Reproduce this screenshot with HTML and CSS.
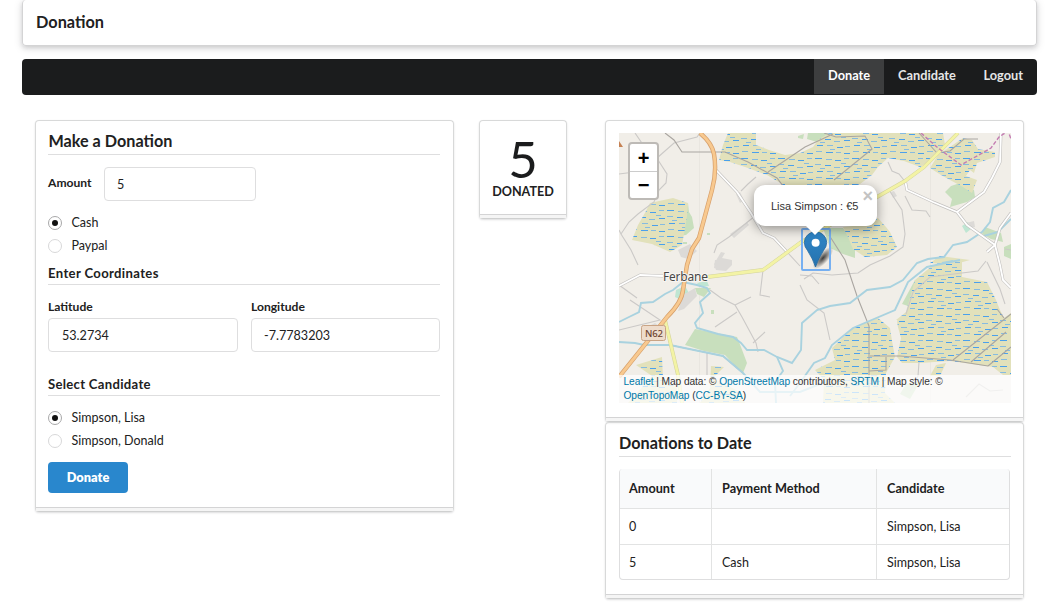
FILE: index.html
```html
<!DOCTYPE html>
<html lang="en">
<head>
<meta charset="utf-8">
<title>Donation</title>
<link rel="stylesheet" href="styles.css">
</head>
<body>
<header class="banner"><h1>Donation</h1></header>
<nav class="menu">
  <a class="item active">Donate</a><a class="item">Candidate</a><a class="item">Logout</a>
</nav>
<main class="grid">
  <section class="segment form">
    <h3>Make a Donation</h3>
    <div class="amount"><label>Amount</label><input type="text" value="5"></div>
    <div class="radios">
      <label class="radio"><i class="dot on"></i>Cash</label>
      <label class="radio"><i class="dot"></i>Paypal</label>
    </div>
    <h4>Enter Coordinates</h4>
    <div class="coords">
      <div class="field"><label>Latitude</label><input type="text" value="53.2734"></div>
      <div class="field"><label>Longitude</label><input type="text" value="-7.7783203"></div>
    </div>
    <h4 class="candidate-title">Select Candidate</h4>
    <div class="radios candidates">
      <label class="radio"><i class="dot on"></i>Simpson, Lisa</label>
      <label class="radio"><i class="dot"></i>Simpson, Donald</label>
    </div>
    <button class="button">Donate</button>
  </section>
  <section class="segment statistic">
    <div class="value">5</div>
    <div class="caption">Donated</div>
  </section>
  <div class="right">
    <section class="segment map-box">
      <div class="map">
        <svg class="tiles" viewBox="619 133 392 270" width="392" height="270">
          <defs>
            <pattern id="bog" width="37" height="26" patternUnits="userSpaceOnUse">
              <rect width="37" height="26" fill="#e2e1bb"/>
              <g stroke-width="1">
                <path stroke="#4aa0ec" d="M1 2.500h7M21 4.500h6M11 9.500h6M30 10.500h6M3 15.500h6M23 17.500h6M12 22.500h7M30 23.500h6"/>
                <path stroke="#86bbe0" d="M12 3.500h6M30 2.500h5M1 8.500h6M20 11.500h6M13 15.500h6M31 16.500h5M2 21.500h6M22 22.500h5M6 12.500h5M27 7.500h5M16 19.500h5"/>
              </g>
            </pattern>
            <radialGradient id="sh"><stop offset="0" stop-opacity=".75"/><stop offset="1" stop-opacity="0"/></radialGradient>
            <linearGradient id="pin" x2="0" y2="1"><stop stop-color="#2f86c7"/><stop offset="1" stop-color="#2572ae"/></linearGradient>
          </defs>
          <rect x="619" y="133" width="392" height="270" fill="#f1eee8"/>
          <path stroke="#e9e6e0" d="M699.500 133V403M930.500 133V403"/>
          <!-- woodland and meadow -->
          <g fill="#c8dfbd">
            <path d="M808 133H829L817 142L807 139ZM798 136L804 134L803 139L798 138Z"/>
            <path d="M688 203L689 212L692 217L694 228L686 235L679 236Z"/>
            <path d="M823 228H843L855 245V258L843 254L830 248Z"/>
            <path d="M945 192L951 186L960 183L974 190L975 197L967 202L950 207L952 199Z"/>
            <path d="M695 329L737 337L741 347L747 363L743 373L735 366L725 355L704 351L685 345Z"/>
            <path d="M915 280L902 304L908 306L919 285Z"/>
            <path d="M985 227L1001 233L1003 242L991 239L982 234ZM1004 247L1011 244V259L1004 256Z"/>
            <path d="M695 288L711 288L704 297L697 294ZM711 310h3v4h-3ZM906 384L920 382L910 399L900 394ZM707 233h3v2h-3ZM683 242h4v2h-4Z"/>
          </g>
          <path fill="#bfe6d3" d="M676 290l9-4 4 7-9 2-1 4-4-2ZM697 283l10-2 2 5-9 1ZM962 226l6-4 3 7-5 4Z"/>
          <!-- built-up areas -->
          <g fill="#dcdad7">
            <path d="M714 264l7-12 4 1-3 5 10 2v5l-6 6-10-1ZM678 250l12-6 7 7-9 8-7-2ZM643 329l12-6 8 6-11 6-10-1ZM966 223l8-2 1 6-6 1ZM730 234l17-12 2 3-15 13ZM736 194l4-2 4 8-4 3ZM891 192l3-1 3 5-4 2ZM683 295l12-7 2 8-13 13-6 2ZM715 260l7-1 4 7-5 4-7-2Z"/>
          </g>
          <!-- bogs -->
          <g fill="url(#bog)">
            <path d="M728 133H756V145L769 150L785 155L800 153L813 147L818 140L829 133H943L945 145L936 157L920 167L904 161L888 158L878 167L872 175L860 184L845 190H785L782 184L767 175L748 168L730 162L719 160L723 145Z"/>
            <path d="M963 138L972 140L978 149L995 152V157L977 163L974 173L970 170L966 176L977 180L972 193L963 187L950 180L941 175L930 168L938 155Z"/>
            <path d="M650 203L673 198L688 203L687 216L685 228L682 245L670 252L652 244L632 240L638 225L646 211Z"/>
            <path d="M843 227L863 225L878 218L886 227L890 232L897 247L887 255L865 257L853 249L848 237Z"/>
            <path d="M933 265L962 260V277L987 282L996 300L1000 310L1004 318L1011 313V375H1003L993 367L950 361L920 363L902 363L897 357L901 338L896 320L906 312L915 280Z"/>
            <path d="M853 328L878 318L890 328L892 341L895 357L886 373L885 393L895 403H823L824 380L815 370L835 360L832 348Z"/>
            <path d="M636 365L662 357L663 378L677 388V403H628L652 376ZM711 366L724 367L713 378L740 392L745 403H700L710 388ZM936 365L946 363L940 376H930ZM940 256L970 260L952 265L930 263Z"/>
          </g>
          <!-- minor tracks -->
          <g fill="none" stroke="#cbc9c7" stroke-width="1.100">
            <path d="M635 133L646 149L657 158L650 169L642 171L619 174M657 158L674 143L697 137L700 133M658 160L667 174L666 183L659 190L654 202L638 214L629 222L621 234L619 230M621 234L631 250L638 265"/>
            <path d="M756 177L748 184L741 191M714 253L717 245L729 237L755 216M788 253L800 266M889 190L902 210L905 234L903 247L890 256L870 265L858 273L832 275L813 273L804 279"/>
            <path d="M905 196L912 210L926 211L930 217M888 162L892 171L899 174L907 184M619 285L637 298M710 290L721 298L735 305L742 317L756 343L758 352M735 305L751 297M715 327L737 312M763 270L760 295L770 297M753 343L765 332M707 353V375M800 275L812 276L819 284M919 362L918 376L910 391M800 285L807 300L824 313L830 340"/>
            <path d="M906 314L913 292L930 277L962 273L978 271L986 261M987 262L1000 289L1005 304M966 397L979 384L990 391L1003 390M1005 249L1011 250M630 300L660 320L619 330"/>
          </g>
          <g fill="none" stroke="#aaa6a1" stroke-width="1.100">
            <path d="M665 133L674 140L682 152L725 152L748 162L777 178L786 190M768 172L805 147L833 134M834 180L872 149L865 136L836 137L824 133M919 133L937 153L950 151L964 139L978 139"/>
            <path d="M829 235L845 260L857 296L869 326V403M870 356L900 356L950 360L988 366M953 360L1011 314M971 362L1006 332M988 366L1011 347M869 371L886 370V357M670 345L723 356L743 373M997 309L1004 318"/>
          </g>
          <!-- rivers -->
          <g fill="none" stroke="#a9d2df" stroke-width="1.900">
            <path d="M1011 190L1004 202L993 208L990 222L982 232L967 242L953 245L944 257L928 259L917 263L903 280L890 287L867 290L850 303L830 306L817 310L802 323L801 350L792 363L777 357L764 350L747 350L741 343L733 337L718 334L697 328L695 323L703 313L700 302L710 293L707 288L697 285L683 282L673 290L665 294L653 302L641 303L639 312L629 317L619 322"/>
            <path d="M960 260L927 267L908 282L895 310L853 328L832 345L825 358L814 363L800 383L790 396"/>
            <path d="M619 342L635 343L644 345L670 345L723 356L743 373L760 392H800L830 380M777 357L783 371L775 382L776 403"/>
            <path d="M1011 219L998 232L984 236M942 263L953 261"/>
          </g>
          <!-- local roads -->
          <g fill="none" stroke-linejoin="round">
            <path stroke="#c3c1bf" stroke-width="3" d="M716 170L737 192L751 213L763 233L774 238L788 253M1001 133L1000 162L992 178L984 192L957 212L933 202L907 190L905 180M957 212L967 225L995 245L1000 265L1003 280L1011 288M1011 213L1000 228L995 245L987 252M619 286L640 275L663 276"/>
            <path stroke="#fff" stroke-width="1.800" d="M716 170L737 192L751 213L763 233L774 238L788 253M1001 133L1000 162L992 178L984 192L957 212L933 202L907 190L905 180M957 212L967 225L995 245L1000 265L1003 280L1011 288M1011 213L1000 228L995 245L987 252M619 286L640 275L663 276"/>
            <path stroke="#f1eee8" stroke-width="2.500" d="M896 320V355"/>
            <path stroke="#d3d39c" stroke-width="3.800" d="M958 133L943 148L924 167L905 181L877 197L830 225L800 243L770 265L763 270L707 277M665 320L678 375L682 403"/>
            <path stroke="#f3f3a5" stroke-width="2.800" d="M958 133L943 148L924 167L905 181L877 197L830 225L800 243L770 265L763 270L707 277M665 320L678 375L682 403"/>
            <path stroke="#d7a06c" stroke-width="4.400" d="M700 133Q712 143 714 154Q717 172 712 190L699 238L692 249L687 265L683 290Q682 302 667 317L619 377"/>
            <path stroke="#f8c98f" stroke-width="2.900" d="M700 133Q712 143 714 154Q717 172 712 190L699 238L692 249L687 265L683 290Q682 302 667 317L619 377"/>
          </g>
          <path fill="none" stroke="#c47db2" stroke-width="1.400" stroke-dasharray="4 2" d="M921 133L938 148L961 165L991 148L999 137L1008 131L1011 139"/>
          <path fill="#c58153" d="M619 141L623 147H619Z"/>
          <text class="town" x="663" y="281" textLength="45">Ferbane</text>
          <rect x="641.500" y="325.500" width="24" height="15" rx="2" fill="#eedccb" stroke="#c9a384"/>
          <text class="ref" x="645" y="337" textLength="18">N62</text>
          <!-- marker -->
          <ellipse cx="823" cy="258" rx="14" ry="5.500" fill="url(#sh)" transform="rotate(-48 823 258)"/>
          <rect x="802" y="229" width="28" height="41" rx="1" fill="none" stroke="#77b0f1" stroke-width="2"/>
          <path fill="url(#pin)" stroke="#2569a0" stroke-width=".8" d="M815.500 267Q813 259 807.500 250.500Q804.300 246.500 804.300 242.500A11.200 10.700 0 0 1 826.700 242.500Q826.700 246.500 823.500 250.500Q818 259 815.500 267Z"/>
          <circle cx="815.600" cy="242.800" r="4" fill="#fff"/>
        </svg>
        <div class="zoom"><span>+</span><span>−</span></div>
        <div class="popup">Lisa Simpson : €5<b>×</b></div>
        <div class="attribution"><a>Leaflet</a> | Map data: © <a>OpenStreetMap</a> contributors, <a>SRTM</a> | Map style: ©<br><a>OpenTopoMap</a> (<a>CC-BY-SA</a>)</div>
      </div>
    </section>
    <section class="segment report">
      <h3>Donations to Date</h3>
      <table>
        <thead><tr><th>Amount</th><th>Payment Method</th><th>Candidate</th></tr></thead>
        <tbody>
          <tr><td>0</td><td></td><td>Simpson, Lisa</td></tr>
          <tr><td>5</td><td>Cash</td><td>Simpson, Lisa</td></tr>
        </tbody>
      </table>
    </section>
  </div>
</main>
</body>
</html>
```
FILE: styles.css
```css
* { box-sizing: border-box; }
body {
  margin: 0;
  height: 612px;
  overflow: hidden;
  background: #fff;
  color: #212121;
  font: 12.500px/18px Lato, sans-serif;
}
h1, h3, h4 { margin: 0; font-weight: 700; }
.banner {
  height: 46px;
  margin: 0 11px 0 22px;
  padding: 12px 13px;
  border: 1px solid #d4d4d5;
  border-top: 0;
  border-radius: 4px;
  box-shadow: 0 2px 4px rgba(34,36,38,.12), 0 2px 9px rgba(34,36,38,.15);
}
h1 { font-size: 16.300px; line-height: 19px; }
.menu {
  display: flex;
  justify-content: flex-end;
  height: 36px;
  margin: 13px 11px 0 22px;
  border-radius: 4px;
  background: #1b1c1d;
  overflow: hidden;
}
.item {
  height: 35px;
  padding: 0 14px;
  color: #e6e6e6;
  font-weight: 700;
  font-size: 12.800px;
  line-height: 33px;
}
.item:nth-child(2) { width: 86px; }
.item:nth-child(3) { width: 67px; padding-left: 13.500px; }
.item.active { width: 70px; background: #3d3e3f; color: #fff; }
.grid {
  display: grid;
  grid-template-columns: 419px 88px 419px;
  column-gap: 25px;
  align-items: start;
  margin: 25px 0 0 35px;
}
.right { margin-left: 13px; width: 419px; }
.segment {
  position: relative;
  border: 1px solid #d8d9d9;
  border-bottom-color: #cfd0d0;
  border-radius: 4px;
  padding: 12px;
  box-shadow: 0 1px 2px rgba(34,36,38,.15);
}
.segment::after {
  content: "";
  position: absolute;
  left: 0;
  right: 0;
  bottom: 0;
  height: 3px;
  border-top: 1px solid #d4d4d5;
  background: #f5f5f5;
}
h3 {
  height: 22px;
  border-bottom: 1px solid #dededf;
  font-size: 16.200px;
  line-height: 16px;
}
h4 {
  height: 20px;
  border-bottom: 1px solid #dededf;
  font-size: 13.100px;
  line-height: 16px;
  letter-spacing: .35px;
}
.form h3 { padding-left: .5px; }
input {
  height: 34px;
  padding: 0 13px;
  border: 1px solid #dededf;
  border-radius: 4px;
  background: #fff;
  color: #212121;
  font: 12.600px Lato, sans-serif;
}
.form { height: 392px; padding-right: 13px; }
.amount { display: flex; gap: 13px; margin-top: 12px; }
.amount label { width: 43px; line-height: 31px; }
.amount input { width: 152px; padding: 0 12px; }
.amount label, .field label { font-size: 12.100px; font-weight: 700; }
.radios { height: 46px; margin-top: 10px; }
.radio { display: flex; align-items: center; gap: 9.500px; height: 23px; line-height: 22px; padding-bottom: 1px; }
.dot {
  display: grid;
  place-items: center;
  width: 14px;
  height: 14px;
  border: 1px solid #d8d8d9;
  border-radius: 50%;
}
.dot.on { border-color: #a8a8a9; }
.dot.on::after { content: ""; width: 6px; height: 6px; border-radius: 50%; background: #111; }
.radio { padding: 1px 0 0; line-height: 20px; }
.dot { margin-top: -1px; }
.form h4 { margin-top: 8px; }
.coords { display: grid; grid-template-columns: 190px 189px; gap: 13px; margin-top: 13px; }
.coords .field + .field input { padding-left: 12px; }
.field { display: flex; flex-direction: column; }
.field label { height: 20px; line-height: 18px; }
.form .candidate-title { margin-top: 24px; letter-spacing: .3px; }
.button {
  display: block;
  width: 80px;
  height: 31px;
  margin-top: 10px;
  padding: 0;
  border: 0;
  border-radius: 4px;
  background: #2987cd;
  color: #fff;
  font: 800 12.800px/31px Lato, sans-serif;
}
.statistic { height: 99px; text-align: center; padding: 17px 0 0; }
.value { height: 44px; font-size: 51px; line-height: 41px; color: #1b1c1d; }
.caption { font-size: 12.600px; font-weight: 700; line-height: 20px; text-transform: uppercase; }
.map-box { height: 302px; padding: 12px 13px; }
.map { position: relative; width: 392px; height: 270px; overflow: hidden; font-family: "Liberation Sans", sans-serif; }
.tiles { display: block; }
.town { font: 12px "Noto Sans", sans-serif; fill: #484848; stroke: #f7f5f1; stroke-width: 2px; paint-order: stroke; }
.ref { font: 500 9.500px "Noto Sans", sans-serif; fill: #6d4330; }
.zoom {
  position: absolute;
  left: 9px;
  top: 9px;
  width: 31px;
  border: 2px solid #bdbab6;
  border-radius: 4px;
  background: #fff;
}
.zoom span {
  display: block;
  height: 27px;
  color: #000;
  font: 700 20px/28px "Liberation Sans", sans-serif;
  text-align: center;
}
.zoom span + span { height: 27px; border-top: 1px solid #ccc; line-height: 26px; }
.popup {
  position: absolute;
  left: 135px;
  top: 52px;
  width: 123px;
  height: 41px;
  padding-left: 17px;
  border-radius: 11px;
  background: #fff;
  color: #333;
  font-size: 11px;
  line-height: 42px;
  white-space: nowrap;
  box-shadow: 0 3px 12px rgba(0,0,0,.4);
}
.popup::after {
  content: "";
  position: absolute;
  left: 52px;
  top: 41px;
  border: 9px solid transparent;
  border-top-color: #fff;
  border-bottom: 0;
}
.popup b { position: absolute; right: 4px; top: 4px; color: #c3c3c3; font-size: 18px; line-height: 14px; }
.attribution {
  position: absolute;
  left: 0;
  right: 0;
  bottom: 0;
  height: 28px;
  padding: 0 4.500px;
  background: rgba(255,255,255,.72);
  color: #333;
  font-size: 10.200px;
  letter-spacing: -.08px;
  line-height: 14px;
  white-space: nowrap;
}
.attribution a { color: #0078a8; }
.report { height: 177px; padding: 12px 13px; }
.report h3 { width: 392px; }
table {
  width: 391px;
  margin-top: 12px;
  border: 1px solid #dededf;
  border-top: 0;
  border-radius: 4px;
  border-spacing: 0;
  table-layout: fixed;
  overflow: hidden;
}
th, td { height: 36px; padding: 0 9px 2px; text-align: left; border-left: 1px solid #e2e3e3; border-top: 1px solid #e2e3e3; }
td { padding-bottom: 0; }
td:nth-child(n+2), th:nth-child(n+2) { padding-left: 10px; }
tbody tr:last-child td { height: 35px; padding-top: 1px; }
th { height: 39px; border-top: 0; background: #f9fafb; font-size: 12.700px; font-weight: 700; }
th:first-child, td:first-child { width: 91px; border-left: 0; }
th:nth-child(2) { width: 165px; }
```
